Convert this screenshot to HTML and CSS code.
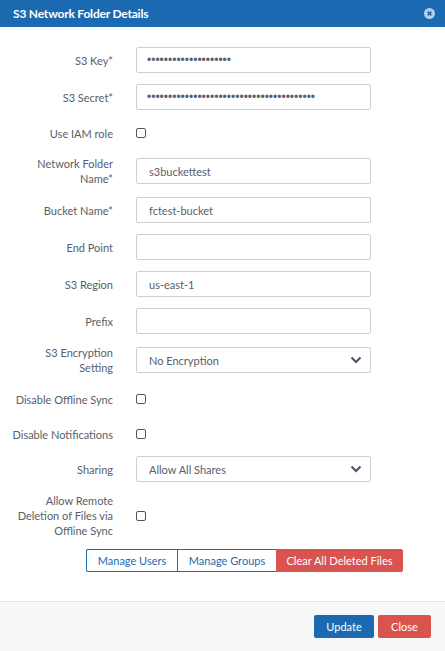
FILE: index.html
```html
<!DOCTYPE html>
<html>
<head>
<meta charset="utf-8">
<link rel="stylesheet" href="styles.css">
</head>
<body>
<div class="modal">
  <div class="modal-header">
    <span class="title">S3 Network Folder Details</span>
    <span class="close-x"><svg width="11" height="11" viewBox="0 0 11 11"><circle cx="5.5" cy="5.5" r="5.5" fill="#b9cde3"/><path d="M3.6 3.6 L7.4 7.4 M7.4 3.6 L3.6 7.4" stroke="#1a69b0" stroke-width="1.5"/></svg></span>
  </div>
  <div class="modal-body">
    <div class="row"><label class="lbl">S3 Key*</label><input class="field pw" type="password" value="aaaaaaaaaaaaaaaaaaaa"></div>
    <div class="row"><label class="lbl">S3 Secret*</label><input class="field pw" type="password" value="aaaaaaaaaaaaaaaaaaaaaaaaaaaaaaaaaaaaaaaa"></div>
    <div class="row iam-row"><label class="lbl">Use IAM role</label><input class="chk" type="checkbox"></div>
    <div class="row"><label class="lbl">Network Folder Name*</label><input class="field" type="text" value="s3buckettest"></div>
    <div class="row"><label class="lbl">Bucket Name*</label><input class="field" type="text" value="fctest-bucket"></div>
    <div class="row"><label class="lbl">End Point</label><input class="field" type="text" value=""></div>
    <div class="row"><label class="lbl">S3 Region</label><input class="field" type="text" value="us-east-1"></div>
    <div class="row"><label class="lbl">Prefix</label><input class="field" type="text" value=""></div>
    <div class="row"><label class="lbl">S3 Encryption Setting</label><div class="field select"><span>No Encryption</span><svg class="chev" width="12" height="8" viewBox="0 0 12 8"><path d="M1.5 1.5 L6 6 L10.5 1.5" fill="none" stroke="#4a5568" stroke-width="2"/></svg></div></div>
    <div class="row chk-row"><label class="lbl">Disable Offline Sync</label><input class="chk" type="checkbox"></div>
    <div class="row chk-row"><label class="lbl">Disable Notifications</label><input class="chk" type="checkbox"></div>
    <div class="row"><label class="lbl">Sharing</label><div class="field select"><span>Allow All Shares</span><svg class="chev" width="12" height="8" viewBox="0 0 12 8"><path d="M1.5 1.5 L6 6 L10.5 1.5" fill="none" stroke="#4a5568" stroke-width="2"/></svg></div></div>
    <div class="row"><label class="lbl">Allow Remote Deletion of Files via Offline Sync</label><input class="chk" type="checkbox"></div>
    <div class="btn-group">
      <button class="gbtn outline">Manage Users</button>
      <button class="gbtn outline mid">Manage Groups</button>
      <button class="gbtn danger">Clear All Deleted Files</button>
    </div>
  </div>
  <div class="modal-footer">
    <button class="fbtn primary">Update</button>
    <button class="fbtn danger">Close</button>
  </div>
</div>
</body>
</html>
```

FILE: styles.css
```css
* { box-sizing: border-box; }
html, body { margin: 0; padding: 0; }
body {
  font-family: Lato, "Open Sans", sans-serif;
  font-size: 11px;
  color: #585e69;
  background: #fff;
  width: 445px;
  height: 651px;
  overflow: hidden;
}
.modal { display: flex; flex-direction: column; height: 651px; }
.modal-header {
  height: 27px;
  background: #1b69b0;
  display: flex;
  align-items: center;
  justify-content: space-between;
  padding: 0 10px 0 13px;
}
.title { color: #fff; font-weight: bold; font-size: 12px; letter-spacing: -0.2px; }
.close-x { display: flex; }
.modal-body {
  flex: 1;
  padding: 20px 0 0 0;
}
.row {
  display: flex;
  align-items: center;
  min-height: 26px;
  margin-bottom: 11px;
}
.iam-row { min-height: 24px; margin-bottom: 11px; }
.chk-row { min-height: 26px; margin-bottom: 9px; }
.lbl {
  width: 113px;
  padding-left: 12px;
  padding-right: 0;
  text-align: right;
  line-height: 15px;
  flex: none;
}
.field {
  margin-left: 23px;
  width: 235px;
  height: 26px;
  border: 1px solid #cfcfcf;
  border-radius: 2px;
  padding: 0 12px;
  font-family: Lato, "Open Sans", sans-serif;
  font-size: 11px;
  color: #585e69;
  background: #fff;
  outline: none;
}
.pw { font-family: "Liberation Sans", sans-serif; font-size: 12px; color: #5a6272; padding-left: 10px; }
.select { display: flex; align-items: center; justify-content: space-between; padding-right: 8px; }
.chk {
  -webkit-appearance: none;
  appearance: none;
  margin: 0 0 0 23px;
  width: 10px;
  height: 10px;
  border: 1px solid #555;
  border-radius: 2px;
  background: #fff;
}
.btn-group {
  display: flex;
  padding-left: 86px;
  margin-top: 10px;
}
.gbtn {
  height: 23px;
  font-family: Lato, "Open Sans", sans-serif;
  font-size: 11px;
  white-space: nowrap;
  border: 1px solid #1b69b0;
  background: #fff;
  color: #1b69b0;
  padding: 0;
  margin: 0;
}
.gbtn:first-child { border-radius: 2px 0 0 2px; width: 91px; border-right: none; }
.gbtn.mid { border-left: 1px solid #1b69b0; border-right: none; width: 99px; }
.gbtn.danger { background: #d9534f; border-color: #d9534f; color: #fff; border-radius: 0 2px 2px 0; width: 127px; }
.modal-footer {
  height: 50px;
  border-top: 1px solid #e5e5e5;
  background: #f8f8f8;
  display: flex;
  justify-content: flex-end;
  align-items: center;
  padding: 0 14px 0 0;
  gap: 4px;
}
.fbtn {
  height: 23px;
  font-family: Lato, "Open Sans", sans-serif;
  font-size: 11px;
  color: #fff;
  border: 1px solid transparent;
  border-radius: 2px;
  margin: 0;
  padding: 0;
}
.fbtn.primary { background: #1b69b0; width: 60px; }
.fbtn.danger { background: #d9534f; width: 53px; }
```
